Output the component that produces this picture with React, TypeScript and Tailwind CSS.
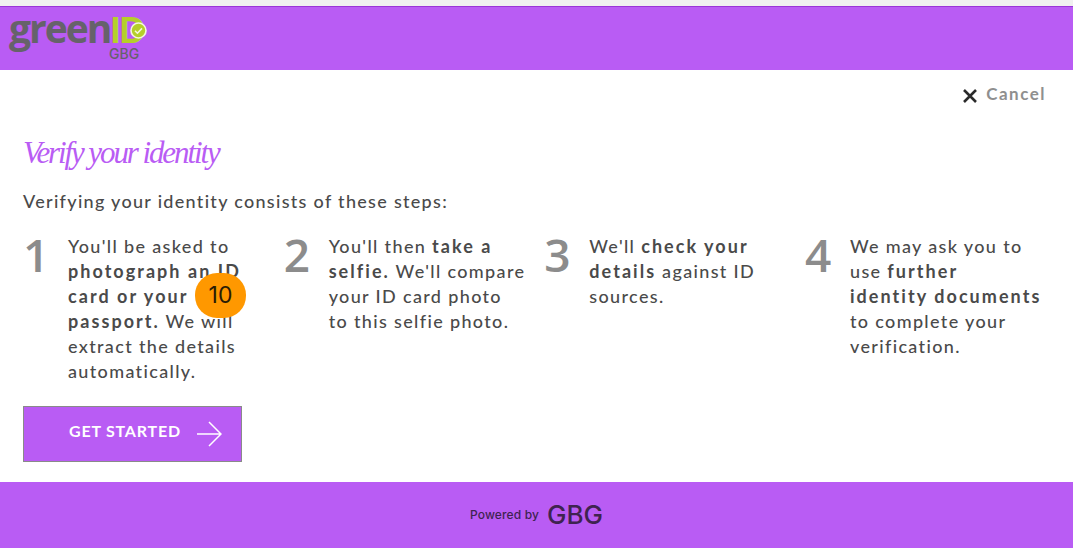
const B = ({ children }: { children: React.ReactNode }) => (
  <b className="font-bold tracking-[2.05px]">{children}</b>
);

const steps: { n: string; lines: React.ReactNode[] }[] = [
  {
    n: "1",
    lines: [
      "You'll be asked to",
      <B key="a">photograph an ID</B>,
      <B key="b">card or your</B>,
      <span key="c"><B>passport.</B> We will</span>,
      "extract the details",
      "automatically.",
    ],
  },
  {
    n: "2",
    lines: [
      <span key="a">You'll then <B>take a</B></span>,
      <span key="b"><B>selfie.</B> We'll compare</span>,
      "your ID card photo",
      "to this selfie photo.",
    ],
  },
  {
    n: "3",
    lines: [
      <span key="a">We'll <B>check your</B></span>,
      <span key="b"><B>details</B> against ID</span>,
      "sources.",
    ],
  },
  {
    n: "4",
    lines: [
      "We may ask you to",
      <span key="a">use <B>further</B></span>,
      <B key="b">identity documents</B>,
      "to complete your",
      "verification.",
    ],
  },
];

export default function App() {
  return (
    <div className="relative flex h-[548px] w-[1073px] flex-col overflow-hidden bg-white font-['Lato',sans-serif] text-[#4a4a4a]">
      <div className="h-[6px] bg-[#f0f0f0]" />
      <header className="flex h-[64px] items-start border-t border-[#9a35d8] bg-[#b95cf4] pl-[9px] pt-[7px]">
        <div className="relative h-[50px] w-[145px]">
          <div className="flex items-baseline font-['Open_Sans',sans-serif] text-[39px] leading-[28px] font-bold tracking-[-2px]">
            <span className="text-[#66626a]">green</span>
            <span className="font-['Liberation_Sans',sans-serif] text-[36px] tracking-[-1px] text-[#b5cf2a]">ID</span>
          </div>
          <span className="absolute left-[100px] top-[32px] font-['Inter',sans-serif] text-[14px] leading-[15px] font-medium text-[#66626a]">GBG</span>
          <svg className="absolute left-[121px] top-[8px]" width="17" height="17" viewBox="0 0 17 17">
            <circle cx="8.5" cy="8.5" r="7.5" fill="#b5cf2a" stroke="#f4f7dc" strokeWidth="1.6" />
            <path d="M5 8.8l2.4 2.4L12 6.4" fill="none" stroke="#f4f7dc" strokeWidth="1.6" />
          </svg>
        </div>
      </header>

      <main className="flex flex-1 flex-col px-[23px]">
        <div className="flex justify-end pr-[4px] pt-[13px]">
          <div className="flex items-center gap-[8px]">
            <svg width="16" height="16" viewBox="0 0 16 16" className="mt-[3px]">
              <path d="M2 2l12 12M14 2L2 14" stroke="#2b2b2b" strokeWidth="2.6" />
            </svg>
            <span className="text-[17px] leading-[22px] font-bold tracking-[1.5px] text-[#8f8f8f]">Cancel</span>
          </div>
        </div>
        <h1 className="mt-[26px] font-['Liberation_Serif',serif] text-[31px] leading-[44px] font-normal tracking-[-2.1px] text-[#b95cf4] italic">
          Verify your identity
        </h1>
        <p className="mt-[14px] text-[18px] leading-[24px] font-medium tracking-[1.3px]">
          Verifying your identity consists of these steps:
        </p>
        <div className="mt-[21px] grid h-[150px] grid-cols-[repeat(4,260.67px)]">
          {steps.map((s) => (
            <div key={s.n} className="flex">
              <div className="w-[45px] font-['Open_Sans',sans-serif] text-[46px] leading-[40px] font-semibold text-[#8c8c8c]">{s.n}</div>
              <div className="text-[18px] leading-[25px] font-medium tracking-[1.35px]">
                {s.lines.map((l, i) => (
                  <div key={i} className="whitespace-nowrap">{l}</div>
                ))}
              </div>
            </div>
          ))}
        </div>
        <button className="mt-[22px] flex h-[56px] w-[219px] items-center border border-[#8a8a8a] bg-[#b95cf4] pl-[45px] text-white">
          <span className="mb-[6px] text-[16px] font-bold tracking-[0.8px]">GET STARTED</span>
          <svg className="ml-[15px]" width="26" height="26" viewBox="0 0 26 26" fill="none" stroke="#fff" strokeWidth="1.5">
            <path d="M1 13h24M13 1l12 12-12 12" />
          </svg>
        </button>
      </main>

      <footer className="flex h-[66px] items-center justify-center gap-[8px] bg-[#b95cf4] text-[#3f2350]">
        <span className="font-['Inter',sans-serif] text-[12px] font-medium tracking-[0.15px]">Powered by</span>
        <span className="font-['Inter',sans-serif] text-[26px] leading-[26px] font-medium">GBG</span>
      </footer>

      <div className="absolute left-[195px] top-[273px] flex h-[45px] w-[51px] items-center justify-center rounded-[22px] bg-[#ff9800] font-['Inter',sans-serif] text-[23px] text-[#2a1c05]">
        10
      </div>
    </div>
  );
}
